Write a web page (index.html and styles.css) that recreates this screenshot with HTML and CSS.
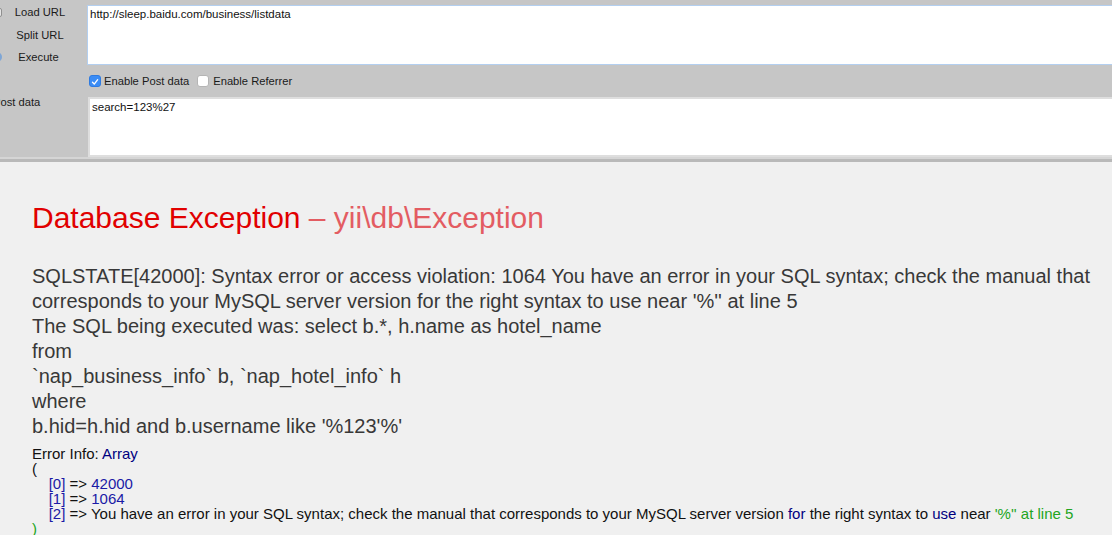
FILE: index.html
```html
<!DOCTYPE html>
<html>
<head>
<meta charset="utf-8">
<title>Database Exception</title>
<link rel="stylesheet" href="styles.css">
</head>
<body>
<div class="toolbar">
  <div class="side">
    <div class="btn"><span class="ico ico-sq"></span><span class="lbl">Load URL</span></div>
    <div class="btn"><span class="ico"></span><span class="lbl">Split URL</span></div>
    <div class="btn"><span class="ico ico-round"></span><span class="lbl lbl-exec">Execute</span></div>
  </div>
  <div class="urlbox">http://sleep.baidu.com/business/listdata</div>
  <div class="spacer"></div>
  <div class="opts">
    <label class="opt"><span class="cb cb-on"><svg width="12" height="12" viewBox="0 0 12 12"><path d="M3 6.3 L5.1 8.6 L9.2 3.2" fill="none" stroke="#fff" stroke-width="1.6" stroke-linecap="round" stroke-linejoin="round"/></svg></span>Enable Post data</label>
    <label class="opt"><span class="cb"></span>Enable Referrer</label>
  </div>
  <div class="postlbl">Post data</div>
  <div class="postbox">search=123%27</div>
</div>
<div class="content">
  <h1 class="title"><span class="title-main">Database Exception</span> – yii\db\Exception</h1>
  <h2 class="msg">SQLSTATE[42000]: Syntax error or access violation: 1064 You have an error in your SQL syntax; check the manual that corresponds to your MySQL server version for the right syntax to use near '%'' at line 5<br>The SQL being executed was: select b.*, h.name as hotel_name<br>from<br>`nap_business_info` b, `nap_hotel_info` h<br>where<br>b.hid=h.hid and b.username like '%123'%'</h2>
  <pre class="info">Error Info: <span class="kw">Array</span>
(
    <span class="num">[0]</span> =&gt; <span class="num">42000</span>
    <span class="num">[1]</span> =&gt; <span class="num">1064</span>
    <span class="num">[2]</span> =&gt; You have an error in your SQL syntax; check the manual that corresponds to your MySQL server version <span class="kw">for</span> the right syntax to <span class="kw">use</span> near <span class="str">'%'' at line 5
)</span></pre>
</div>
</body>
</html>
```
FILE: styles.css
```css
html, body {
  margin: 0;
  padding: 0;
}
body {
  background: #f0f0f0;
  font-family: "Liberation Sans", Arial, Helvetica, sans-serif;
  overflow: hidden;
}
.toolbar {
  display: grid;
  grid-template-columns: 87px 1fr;
  grid-template-rows: 65px 32px 60px;
  background: #c6c6c6;
  border-bottom: 2px solid #d5d5d5;
  box-shadow: 0 3px 0 #b9b9b9;
  margin-bottom: 3px;
  color: #1a1a1a;
  font-size: 11.2px;
}
.side {
  display: flex;
  flex-direction: column;
  padding-top: 1px;
}
.btn {
  display: flex;
  flex: none;
  align-items: center;
  height: 22.5px;
}
.ico {
  width: 10px;
  height: 9px;
  margin-left: -8px;
  flex: none;
}
.ico-sq {
  background: #e4e4e4;
  border: 1px solid #8f8f8f;
  border-radius: 2px;
  box-sizing: border-box;
}
.ico-round {
  background: #7ea6d6;
  border-radius: 50%;
  height: 10px;
}
.lbl {
  flex: 1;
  text-align: center;
  padding-right: 9px;
  line-height: 14px;
}
.lbl-exec {
  padding-right: 12px;
}
.urlbox {
  margin-top: 5px;
  background: #fff;
  border: 1px solid #b3cff0;
  border-right: none;
  padding: 1px 2px;
  font-size: 11.5px;
  line-height: 14px;
  color: #111;
}
.opts {
  display: flex;
  align-items: center;
  padding-left: 2px;
  gap: 8px;
}
.opt {
  display: flex;
  align-items: center;
  line-height: 14px;
}
.cb {
  width: 12px;
  height: 12px;
  box-sizing: border-box;
  border-radius: 3px;
  background: #fff;
  border: 1px solid #b5b5b5;
  margin-right: 3px;
  display: flex;
}
.cb:not(.cb-on) {
  margin-right: 4px;
}
.cb-on {
  background: #3b8cf5;
  border-color: #2f7be0;
}
.postlbl {
  margin-left: -7px;
  margin-top: -2px;
  line-height: 14px;
}
.postbox {
  margin-left: 1px;
  background: #fff;
  border: 2px solid #dedede;
  border-right: none;
  padding: 1px 2px;
  font-size: 11.5px;
  line-height: 14px;
  color: #111;
}
.content {
  padding: 38px 0 0 32px;
}
.title {
  margin: 0;
  font-size: 30px;
  line-height: 36px;
  font-weight: normal;
  color: #e35c62;
}
.title-main {
  color: #e10000;
}
.msg {
  margin: 28px 0 0;
  font-size: 20px;
  line-height: 25px;
  font-weight: normal;
  color: #383838;
}
.info {
  margin: 7px 0 0;
  font-family: "Liberation Sans", Arial, Helvetica, sans-serif;
  font-size: 15px;
  line-height: 15px;
  color: #111;
  white-space: pre;
}
.kw {
  color: #000080;
}
.num {
  color: #1a1aa6;
}
.str {
  color: #22a522;
}
```
